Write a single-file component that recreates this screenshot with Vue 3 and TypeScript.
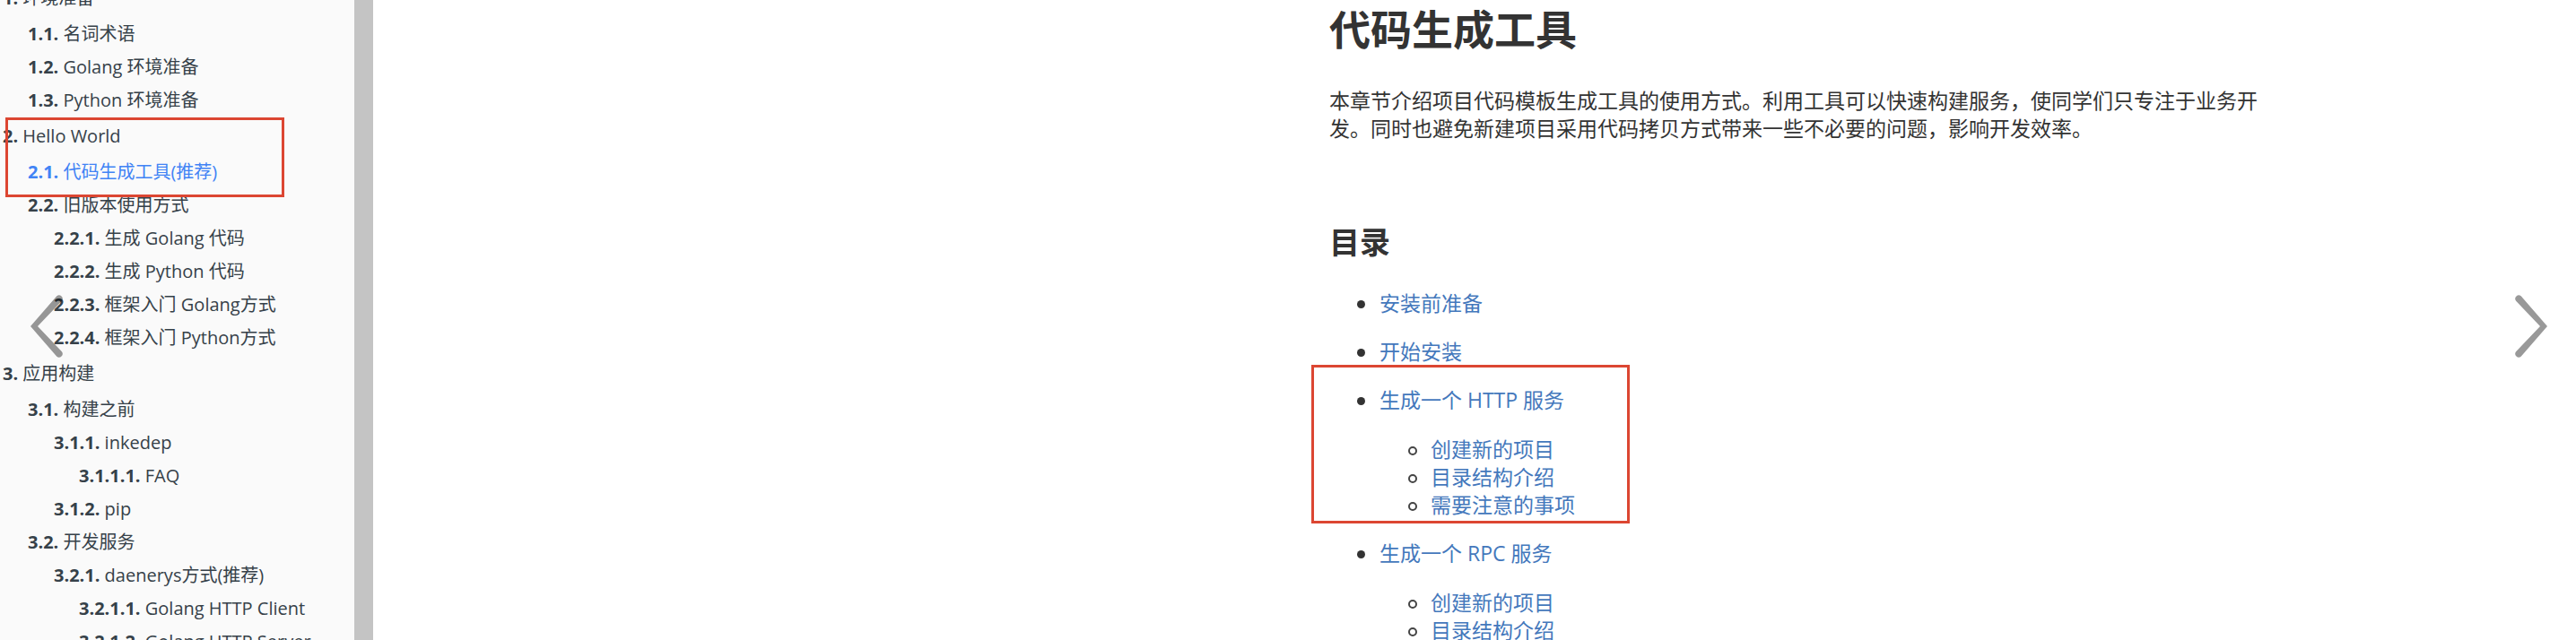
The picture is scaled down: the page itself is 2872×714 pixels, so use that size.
<script setup lang="ts">
interface Chapter {
  no: string
  title: string
  active?: boolean
  marked?: boolean
  children?: Chapter[]
}

interface Row {
  no: string
  title: string
  depth: number
  active: boolean
  marked: boolean
}

interface Topic {
  title: string
  marked?: boolean
  children?: string[]
}

const chapters: Chapter[] = [
  {
    no: '1.',
    title: '环境准备',
    children: [
      { no: '1.1.', title: '名词术语' },
      { no: '1.2.', title: 'Golang 环境准备' },
      { no: '1.3.', title: 'Python 环境准备' },
    ],
  },
  {
    no: '2.',
    title: 'Hello World',
    marked: true,
    children: [
      { no: '2.1.', title: '代码生成工具(推荐)', active: true },
      {
        no: '2.2.',
        title: '旧版本使用方式',
        children: [
          { no: '2.2.1.', title: '生成 Golang 代码' },
          { no: '2.2.2.', title: '生成 Python 代码' },
          { no: '2.2.3.', title: '框架入门 Golang方式' },
          { no: '2.2.4.', title: '框架入门 Python方式' },
        ],
      },
    ],
  },
  {
    no: '3.',
    title: '应用构建',
    children: [
      {
        no: '3.1.',
        title: '构建之前',
        children: [
          { no: '3.1.1.', title: 'inkedep', children: [{ no: '3.1.1.1.', title: 'FAQ' }] },
          { no: '3.1.2.', title: 'pip' },
        ],
      },
      {
        no: '3.2.',
        title: '开发服务',
        children: [
          {
            no: '3.2.1.',
            title: 'daenerys方式(推荐)',
            children: [
              { no: '3.2.1.1.', title: 'Golang HTTP Client' },
              { no: '3.2.1.2.', title: 'Golang HTTP Server' },
            ],
          },
        ],
      },
    ],
  },
]

function flatten(list: Chapter[], depth = 0): Row[] {
  return list.flatMap((c) => [
    { no: c.no, title: c.title, depth, active: !!c.active, marked: !!c.marked },
    ...flatten(c.children ?? [], depth + 1),
  ])
}

const rows = flatten(chapters)

const topics: Topic[] = [
  { title: '安装前准备' },
  { title: '开始安装' },
  {
    title: '生成一个 HTTP 服务',
    marked: true,
    children: ['创建新的项目', '目录结构介绍', '需要注意的事项'],
  },
  {
    title: '生成一个 RPC 服务',
    children: ['创建新的项目', '目录结构介绍'],
  },
]
</script>

<template>
  <div class="book">
    <nav class="summary" aria-label="目录">
      <ul class="chapters">
        <li
          v-for="row in rows"
          :key="row.no"
          :class="['chapter', 'depth-' + row.depth, { active: row.active, marked: row.marked }]"
        >
          <a href="#"><b>{{ row.no }}</b> {{ row.title }}</a>
        </li>
      </ul>
    </nav>

    <main class="page">
      <article class="content">
        <h1>代码生成工具</h1>
        <p>
          本章节介绍项目代码模板生成工具的使用方式。利用工具可以快速构建服务，使同学们只专注于业务开发。同时也避免新建项目采用代码拷贝方式带来一些不必要的问题，影响开发效率。
        </p>
        <h2>目录</h2>
        <ul class="topics">
          <li v-for="topic in topics" :key="topic.title" :class="{ marked: topic.marked }">
            <a href="#">{{ topic.title }}</a>
            <ul v-if="topic.children" class="subtopics">
              <li v-for="sub in topic.children" :key="sub">
                <a href="#">{{ sub }}</a>
              </li>
            </ul>
          </li>
        </ul>
      </article>
    </main>

    <button class="turn prev" type="button" aria-label="上一页">
      <svg viewBox="0 0 36 70" width="36" height="70" aria-hidden="true">
        <path d="M29.3 1.2a4 4 0 0 1 5.6 5.6L8 35l26.900 28.200a4 4 0 0 1-5.600 5.600L0 35z" />
      </svg>
    </button>
    <button class="turn next" type="button" aria-label="下一页">
      <svg viewBox="0 0 36 70" width="36" height="70" aria-hidden="true">
        <path d="M6.700 1.200a4 4 0 0 0-5.600 5.600L28 35 1.100 63.200a4 4 0 0 0 5.600 5.600L36 35z" />
      </svg>
    </button>
  </div>
</template>

<style>
body {
  margin: 0;
}
</style>

<style scoped>
.book {
  position: relative;
  display: flex;
  height: 100vh;
  overflow: hidden;
  background: #fff;
  font-family: 'Open Sans', 'Noto Sans CJK SC', sans-serif;
}

a {
  color: inherit;
  text-decoration: none;
}

ul {
  margin: 0;
  padding: 0;
  list-style: none;
}

.summary {
  flex: none;
  width: 395px;
  overflow: hidden;
  border-right: 21px solid #c4c4c4;
  background: #fafafa;
  color: #364149;
  font-size: 20px;
  line-height: 37px;
}

/* The panel is scrolled slightly past its first entry. */
.chapters {
  margin-top: -24px;
}

.chapter {
  height: 37px;
  white-space: nowrap;
}

.depth-0 {
  padding: 3px 0 3px 3px;
}

.depth-1 {
  padding-left: 31px;
}

.depth-2 {
  padding-left: 60px;
}

.depth-3 {
  padding-left: 88px;
}

.active {
  color: #4183f5;
}

.marked {
  position: relative;
}

.marked::after {
  position: absolute;
  box-sizing: border-box;
  border: 3px solid #dc4632;
  content: '';
  pointer-events: none;
}

.chapter.marked::after {
  top: 1px;
  left: 6px;
  width: 311px;
  height: 89px;
}

.page {
  display: grid;
  flex: 1;
  grid-template-columns: 1066fr 1040fr 350fr;
}

.content {
  grid-column: 2;
  color: #333;
  font-size: 23px;
  line-height: 31px;
}

h1 {
  margin: 0 0 33px;
  font-size: 46px;
  line-height: 64px;
}

p {
  margin: 0 0 88px;
}

h2 {
  margin: 0 0 30px;
  font-size: 34px;
  line-height: 46px;
}

.topics {
  padding-left: 56px;
}

.topics a {
  color: #4478bc;
}

.topics li {
  position: relative;
}

.topics > li {
  margin-bottom: 23px;
}

.topics li::before {
  position: absolute;
  top: 12px;
  left: -25px;
  box-sizing: border-box;
  width: 9px;
  height: 9px;
  border-radius: 50%;
  background: #333;
  content: '';
}

.subtopics {
  margin-top: 24px;
  padding-left: 57px;
}

.topics .subtopics li::before {
  width: 10px;
  height: 10px;
  border: 2px solid #444;
  background: none;
}

.topics > .marked::after {
  top: -24px;
  left: -76px;
  width: 355px;
  height: 177px;
}

.turn {
  position: absolute;
  top: 329px;
  padding: 0;
  border: 0;
  background: none;
  line-height: 0;
  cursor: pointer;
}

.turn path {
  fill: rgba(0, 0, 0, 0.4);
}

.prev {
  left: 34px;
}

.next {
  right: 32px;
}
</style>
